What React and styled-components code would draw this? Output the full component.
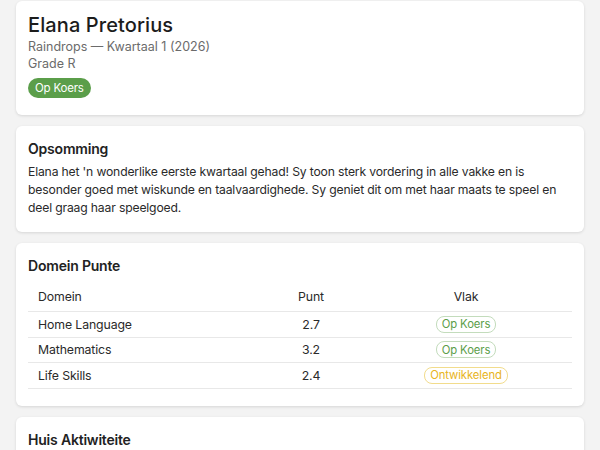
import React from "react";
import styled, { createGlobalStyle } from "styled-components";

const GlobalStyle = createGlobalStyle`
  html, body {
    margin: 0;
    padding: 0;
    background: #f3f3f3;
    font-family: Inter, "Noto Sans", sans-serif;
    color: #222;
  }
`;

const domains = [
  { name: "Home Language", score: "2.7", status: "good" },
  { name: "Mathematics", score: "3.2", status: "good" },
  { name: "Life Skills", score: "2.4", status: "dev" },
];

const Page = () => (
  <>
    <GlobalStyle />
    <Wrap>
      <Card $bottom={17}>
        <Name>Elana Pretorius</Name>
        <Meta>Raindrops — Kwartaal 1 (2026)</Meta>
        <Meta>Grade R</Meta>
        <Pill>Op Koers</Pill>
      </Card>

      <Card $bottom={15}>
        <Heading>Opsomming</Heading>
        <Body>
          Elana het 'n wonderlike eerste kwartaal gehad! Sy toon sterk vordering in alle vakke en is
          besonder goed met wiskunde en taalvaardighede. Sy geniet dit om met haar maats te speel en
          deel graag haar speelgoed.
        </Body>
      </Card>

      <Card $bottom={17}>
        <Heading>Domein Punte</Heading>
        <Table>
          <colgroup>
            <col style={{ width: 234 }} />
            <col style={{ width: 98 }} />
            <col />
          </colgroup>
          <thead>
            <tr>
              <Th>Domein</Th>
              <Th $center>Punt</Th>
              <Th $center>Vlak</Th>
            </tr>
          </thead>
          <tbody>
            {domains.map((d) => (
              <tr key={d.name}>
                <Td>{d.name}</Td>
                <Td $center>{d.score}</Td>
                <Td $center>
                  <Tag $status={d.status}>
                    {d.status === "good" ? "Op Koers" : "Ontwikkelend"}
                  </Tag>
                </Td>
              </tr>
            ))}
          </tbody>
        </Table>
      </Card>

      <Card>
        <Heading>Huis Aktiwiteite</Heading>
        <Body>&nbsp;</Body>
      </Card>
    </Wrap>
  </>
);

const Wrap = styled.div`
  padding: 1px 16px 16px;
  display: flex;
  flex-direction: column;
  gap: 11px;
`;

const Card = styled.div`
  background: #fff;
  border-radius: 6px;
  box-shadow: 0 1px 3px rgba(0, 0, 0, 0.12);
  padding: 12px 12px ${(p) => p.$bottom || 16}px;
  display: flex;
  flex-direction: column;
  align-items: flex-start;
`;

const Name = styled.h1`
  margin: 0;
  font-size: 20px;
  font-weight: 500;
  line-height: 25px;
  letter-spacing: 0.1px;
  color: #1c1c1c;
`;

const Meta = styled.div`
  font-size: 12.5px;
  line-height: 17px;
  color: #6b6b6b;
`;

const Pill = styled.span`
  margin-top: 6px;
  display: inline-flex;
  align-items: center;
  height: 20px;
  padding: 0 7px;
  border-radius: 10px;
  background: #5b9e4a;
  color: #fff;
  font-size: 11.5px;
  letter-spacing: -0.2px;
`;

const Heading = styled.h2`
  margin: 1px 0 0;
  font-size: 14px;
  font-weight: 600;
  line-height: 20px;
  letter-spacing: -0.2px;
  color: #222;
`;

const Body = styled.p`
  margin: 4px 0 0;
  font-size: 12.2px;
  line-height: 18px;
  letter-spacing: -0.17px;
  color: #2a2a2a;
`;

const Table = styled.table`
  margin-top: 5px;
  width: 100%;
  border-collapse: collapse;
  table-layout: fixed;
  font-size: 12.3px;
  letter-spacing: -0.12px;
  color: #2a2a2a;
`;

const Th = styled.th`
  font-weight: 400;
  text-align: ${(p) => (p.$center ? "center" : "left")};
  padding: 0 10px;
  height: 30px;
  border-bottom: 1px solid #e8e8e8;
`;

const Td = styled.td`
  text-align: ${(p) => (p.$center ? "center" : "left")};
  padding: 0 10px;
  height: 24.6px;
  border-bottom: 1px solid #e8e8e8;
`;

const Tag = styled.span`
  display: inline-flex;
  align-items: center;
  height: 15px;
  padding: 0 5px;
  border-radius: 8px;
  font-size: 11.3px;
  letter-spacing: -0.1px;
  color: ${(p) => (p.$status === "good" ? "#5b9e4a" : "#e8b422")};
  border: 1px solid ${(p) => (p.$status === "good" ? "#c3dcbc" : "#f2dc8c")};
`;

export default Page;
